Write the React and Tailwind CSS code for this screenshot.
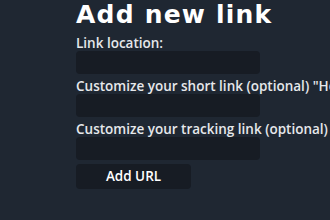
import React, { useState } from 'react';

const labelCls =
  "block whitespace-nowrap text-[13.5px] leading-[16px] font-semibold text-[#e6e8eb] font-['Open_Sans',sans-serif]";
const inputCls =
  'block w-[184px] h-[23px] rounded-[4px] bg-[#171c24] border-0 outline-none px-2 text-[13px] text-white';

const AddLinkForm = () => {
  const [location, setLocation] = useState('');
  const [shortLink, setShortLink] = useState('');
  const [tracking, setTracking] = useState('');

  return (
    <div className="pl-[76px]">
      <h1 className="pt-[1px] text-[25px] leading-[28px] font-bold tracking-[1.2px] text-white font-['DejaVu_Sans',sans-serif]">
        Add new link
      </h1>
      <label className={`${labelCls} mt-[6px]`}>Link location:</label>
      <input className={inputCls} value={location} onChange={(e) => setLocation(e.target.value)} />
      <label className={`${labelCls} mt-[4px]`}>
        Customize your short link (optional) "Hello-world"
      </label>
      <input className={inputCls} value={shortLink} onChange={(e) => setShortLink(e.target.value)} />
      <label className={`${labelCls} mt-[4px]`}>
        Customize your tracking link (optional) "Hello-world"
      </label>
      <input className={inputCls} value={tracking} onChange={(e) => setTracking(e.target.value)} />
      <button className="mt-[4px] w-[115px] h-[25px] rounded-[4px] bg-[#171c24] text-[13.5px] font-semibold text-white font-['Open_Sans',sans-serif]">
        Add URL
      </button>
    </div>
  );
};

export default function App() {
  return (
    <div className="w-full h-[220px] overflow-hidden bg-[#1f2732]">
      <AddLinkForm />
    </div>
  );
}
